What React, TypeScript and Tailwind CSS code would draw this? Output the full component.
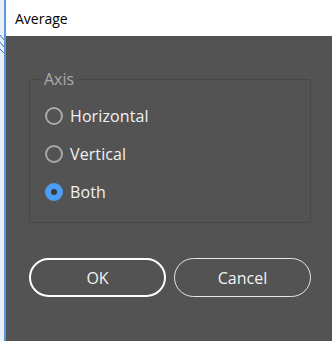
import React from "react";

const options = ["Horizontal", "Vertical", "Both"];

const Radio = ({ checked }: { checked: boolean }) =>
  checked ? (
    <span className="w-[18px] h-[18px] rounded-full bg-[#4b9ef4] flex items-center justify-center">
      <span className="w-[6px] h-[6px] rounded-full bg-[#3a3a3a]" />
    </span>
  ) : (
    <span className="w-[18px] h-[18px] rounded-full border-2 border-[#a9a9a9]" />
  );

export default function App() {
  return (
    <div
      className="w-[332px] h-[341px] flex overflow-hidden"
      style={{ fontFamily: '"Open Sans", "Noto Sans", sans-serif' }}
    >
      {/* window behind */}
      <div className="w-[6px] h-full bg-[#eaf0f7] border-r-2 border-[#5a98dc] relative">
        <svg className="absolute left-0 top-[20px]" width="4" height="40" viewBox="0 0 4 40">
          <path d="M0 15 L4 20 M0 22 L4 27 M0 29 L4 33" stroke="#3b6fc4" strokeWidth="1" fill="none" />
        </svg>
      </div>

      <div className="flex-1 flex flex-col">
        <div className="h-[36px] bg-white flex items-center pl-[9px] text-[14px] text-black">
          Average
        </div>

        <div className="flex-1 bg-[#535353] flex flex-col">
          <fieldset className="mt-[33px] ml-[23px] mr-[21px] h-[154px] border border-[#474747] rounded-[3px] pl-[15px] pt-[16px]">
            <legend className="ml-[-5px] px-[4px] text-[16px] leading-[20px] text-[#aaaaaa]">Axis</legend>
            <div className="flex flex-col gap-[16px]">
              {options.map((o) => (
                <div key={o} className="flex items-center gap-[7px] h-[22px]">
                  <Radio checked={o === "Both"} />
                  <span className="text-[16px] text-[#f2f2f2] tracking-[0.1px]">{o}</span>
                </div>
              ))}
            </div>
          </fieldset>

          <div className="flex gap-[8px] ml-[23px] mr-[21px] mt-[35px]">
            <button className="w-[137px] h-[39px] rounded-full border-[2.5px] border-white text-[16px] text-[#f2f2f2]">
              OK
            </button>
            <button className="w-[137px] h-[39px] rounded-full border-[1.5px] border-[#e6e6e6] text-[16px] text-[#f2f2f2]">
              Cancel
            </button>
          </div>
        </div>
      </div>
    </div>
  );
}
